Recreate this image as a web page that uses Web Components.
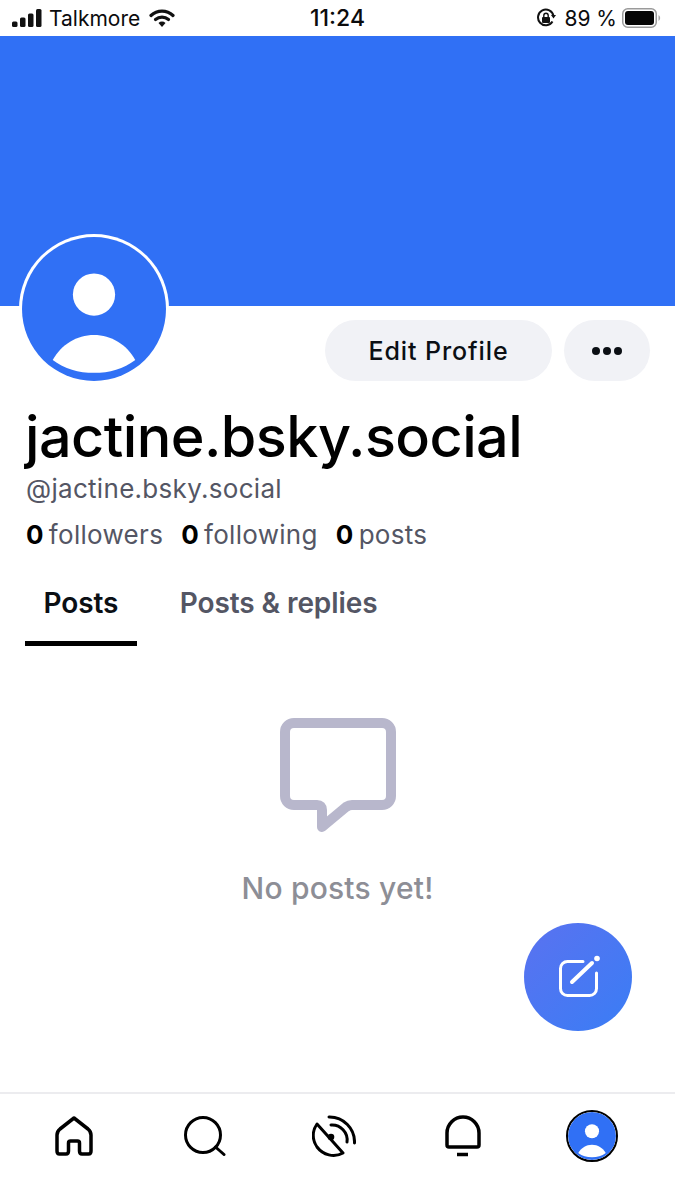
<!DOCTYPE html>
<html lang="en">
<head>
<meta charset="utf-8">
<title>jactine.bsky.social</title>
<style>
  html, body { margin: 0; padding: 0; background: #fff; }
  body { font-family: Inter, "Liberation Sans", sans-serif; width: 675px; height: 1200px; overflow: hidden; }
</style>
</head>
<body>
<app-shell>
  <status-bar carrier="Talkmore" time="11:24" battery="89 %"></status-bar>
  <profile-banner></profile-banner>
  <profile-header name="jactine.bsky.social" handle="@jactine.bsky.social"></profile-header>
  <feed-tabs></feed-tabs>
  <empty-feed>No posts yet!</empty-feed>
  <compose-fab slot="over"></compose-fab>
  <bottom-nav slot="nav"></bottom-nav>
</app-shell>

<script>
// Avatar por defecto, se usa en el perfil y en la barra inferior
const AVATAR_SVG = `
  <svg viewBox="0 0 150 150" width="100%" height="100%" aria-hidden="true">
    <circle cx="75" cy="75" r="75" fill="#3070f5"/>
    <circle cx="75" cy="60" r="22" fill="#fff"/>
    <path d="M32 128 C41 112 57 102 75 102 C93 102 109 112 118 128 C106 137 91 141.500 75 141.500 C59 141.500 44 137 32 128 Z" fill="#fff"/>
  </svg>`;

class AppShell extends HTMLElement {
  constructor() {
    super();
    this.attachShadow({ mode: "open" });
  }

  connectedCallback() {
    this.shadowRoot.innerHTML = `
      <style>
        :host { display: flex; flex-direction: column; position: relative; width: 675px; height: 1200px; }
        main { flex: 1; min-height: 0; display: flex; flex-direction: column; }
      </style>
      <main><slot></slot></main>
      <slot name="over"></slot>
      <slot name="nav"></slot>
    `;
  }
}

class StatusBar extends HTMLElement {
  constructor() {
    super();
    this.attachShadow({ mode: "open" });
  }

  connectedCallback() {
    this.shadowRoot.innerHTML = `
      <style>
        :host { display: grid; grid-template-columns: 1fr auto 1fr; align-items: center; height: 36px; padding: 0 14px 0 12px; color: #0b0b0d; font-size: 21px; }
        .left, .right { display: flex; align-items: center; }
        .left { gap: 7px; }
        .right { justify-content: flex-end; gap: 8px; }
        .time { font-weight: 500; font-size: 23px; margin-left: 2px; }
        svg { display: block; }
      </style>
      <div class="left">
        <svg width="30" height="18" viewBox="0 0 30 18">
          <rect x="0" y="12.500" width="5.500" height="5.500" rx="1.500" fill="#111"/>
          <rect x="8" y="8.500" width="5.500" height="9.500" rx="1.500" fill="#111"/>
          <rect x="16" y="4.500" width="5.500" height="13.500" rx="1.500" fill="#111"/>
          <rect x="24" y="0" width="5.500" height="18" rx="1.500" fill="#111"/>
        </svg>
        <span>${this.getAttribute("carrier")}</span>
        <svg width="26" height="18" viewBox="0 0 26 18" style="margin-left:2px">
          <path d="M2 6.500 A16 16 0 0 1 24 6.500" fill="none" stroke="#111" stroke-width="3.200" stroke-linecap="round"/>
          <path d="M6.500 10.500 A10 10 0 0 1 19.500 10.500" fill="none" stroke="#111" stroke-width="3.200" stroke-linecap="round"/>
          <path d="M13 18 L9.500 14 A5 5 0 0 1 16.500 14 Z" fill="#111"/>
        </svg>
      </div>
      <div class="time">${this.getAttribute("time")}</div>
      <div class="right">
        <svg width="20" height="20" viewBox="0 0 20 20">
          <path d="M16.500 13.500 A7.800 7.800 0 1 1 17.500 8" fill="none" stroke="#111" stroke-width="2"/>
          <path d="M15 7 L20 7 L17.500 10.500 Z" fill="#111"/>
          <rect x="6" y="9" width="8" height="6" rx="1" fill="#111"/>
          <path d="M7.800 9 V7.500 A2.200 2.200 0 0 1 12.200 7.500 V9" fill="none" stroke="#111" stroke-width="1.400"/>
        </svg>
        <span>${this.getAttribute("battery")}</span>
        <svg width="39" height="20" viewBox="0 0 39 20" style="margin-left:-3px">
          <rect x="0.750" y="0.750" width="33.500" height="18.500" rx="5" fill="none" stroke="#9a9a9a" stroke-width="1.500"/>
          <rect x="3" y="3" width="29" height="14" rx="3" fill="#060606"/>
          <path d="M36.500 7 A3.500 3.500 0 0 1 36.500 13 Z" fill="#aaa"/>
        </svg>
      </div>
    `;
  }
}

class ProfileBanner extends HTMLElement {
  constructor() {
    super();
    this.attachShadow({ mode: "open" });
  }

  connectedCallback() {
    this.shadowRoot.innerHTML = `
      <style>
        :host { display: block; height: 270px; background: #3070f5; }
      </style>
    `;
  }
}

class PillButton extends HTMLElement {
  constructor() {
    super();
    this.attachShadow({ mode: "open" });
  }

  connectedCallback() {
    this.shadowRoot.innerHTML = `
      <style>
        :host { display: inline-flex; align-items: center; justify-content: center; height: 61px; border-radius: 31px; background: #f1f2f6; color: #0b0f14; font-size: 25px; font-weight: 500; letter-spacing: 0.9px; cursor: pointer; }
      </style>
      <slot></slot>
    `;
  }
}

class StatItem extends HTMLElement {
  constructor() {
    super();
    this.attachShadow({ mode: "open" });
  }

  connectedCallback() {
    this.shadowRoot.innerHTML = `
      <style>
        :host { display: inline-flex; gap: 5px; font-size: 26px; color: #545664; letter-spacing: 0.3px; white-space: nowrap; }
        b { color: #000; font-weight: 700; }
      </style>
      <b>${this.getAttribute("value")}</b><span>${this.getAttribute("label")}</span>
    `;
  }
}

class ProfileHeader extends HTMLElement {
  constructor() {
    super();
    this.attachShadow({ mode: "open" });
  }

  connectedCallback() {
    this.shadowRoot.innerHTML = `
      <style>
        :host { display: block; position: relative; padding: 14px 25px 0 26px; }
        .avatar { position: absolute; left: 18.500px; top: -72px; width: 144px; height: 144px; padding: 3px; border-radius: 50%; background: #fff; line-height: 0; }
        .actions { display: flex; justify-content: flex-end; gap: 12px; }
        pill-button.edit { width: 227px; }
        pill-button.more { width: 86px; }
        h1 { margin: 21px 0 0 -1px; font-size: 57.500px; line-height: 68px; font-weight: 500; color: #000; letter-spacing: -0.55px; white-space: nowrap; }
        .handle { margin: 3px 0 0 0; font-size: 26px; line-height: 32px; color: #545664; letter-spacing: 0.3px; }
        .stats { display: flex; gap: 18px; margin-top: 14px; line-height: 32px; }
        svg { display: block; }
      </style>
      <div class="avatar">${AVATAR_SVG}</div>
      <div class="actions">
        <pill-button class="edit">Edit Profile</pill-button>
        <pill-button class="more" aria-label="More">
          <svg width="32" height="10" viewBox="0 0 32 10">
            <circle cx="5" cy="5" r="4" fill="#0b0f14"/>
            <circle cx="16" cy="5" r="4" fill="#0b0f14"/>
            <circle cx="27" cy="5" r="4" fill="#0b0f14"/>
          </svg>
        </pill-button>
      </div>
      <h1>${this.getAttribute("name")}</h1>
      <div class="handle">${this.getAttribute("handle")}</div>
      <div class="stats">
        <stat-item value="0" label="followers"></stat-item>
        <stat-item value="0" label="following"></stat-item>
        <stat-item value="0" label="posts"></stat-item>
      </div>
    `;
  }
}

class FeedTabs extends HTMLElement {
  constructor() {
    super();
    this.attachShadow({ mode: "open" });
  }

  connectedCallback() {
    this.shadowRoot.innerHTML = `
      <style>
        :host { display: flex; gap: 24px; padding: 15px 0 0 25px; font-size: 28px; font-weight: 600; color: #545664; letter-spacing: -0.1px; }
        .tab { padding: 17px 19px 0 18.500px; height: 80px; display: flex; align-items: flex-start; line-height: 40px; box-sizing: border-box; border-bottom: 5px solid transparent; }
        .tab.on { color: #0b0f14; border-bottom-color: #000; }
      </style>
      <div class="tab on">Posts</div>
      <div class="tab">Posts &amp; replies</div>
    `;
  }
}

class EmptyFeed extends HTMLElement {
  constructor() {
    super();
    this.attachShadow({ mode: "open" });
  }

  connectedCallback() {
    this.shadowRoot.innerHTML = `
      <style>
        :host { display: flex; flex-direction: column; align-items: center; padding-top: 72px; font-size: 30px; font-weight: 500; color: #8d8e96; letter-spacing: 0.2px; }
        svg { display: block; margin-bottom: 34px; }
        div { line-height: 40px; }
      </style>
      <svg width="116" height="116" viewBox="0 0 116 116">
        <path d="M14 5 H102 A9 9 0 0 1 111 14 V78 A9 9 0 0 1 102 87 H72 Q69 87 66 89 L42 109 V92 Q42 87 37 87 H14 A9 9 0 0 1 5 78 V14 A9 9 0 0 1 14 5 Z" fill="none" stroke="#b8b7cc" stroke-width="10" stroke-linejoin="round"/>
      </svg>
      <div><slot></slot></div>
    `;
  }
}

class ComposeFab extends HTMLElement {
  constructor() {
    super();
    this.attachShadow({ mode: "open" });
  }

  connectedCallback() {
    this.shadowRoot.innerHTML = `
      <style>
        :host { position: absolute; left: 524px; top: 923px; width: 108px; height: 108px; border-radius: 50%; background: linear-gradient(135deg, #5a72f0, #3a7df5); display: flex; align-items: center; justify-content: center; }
        svg { display: block; }
      </style>
      <svg width="44" height="44" viewBox="0 0 44 44" fill="none" stroke="#fff" stroke-width="3" stroke-linecap="round">
        <path d="M27 6.500 H11.500 A7 7 0 0 0 4.500 13.500 V33.500 A7 7 0 0 0 11.500 40.500 H33.500 A7 7 0 0 0 40.500 33.500 V18"/>
        <path d="M16 27 L36 8" stroke-width="4"/>
        <circle cx="41" cy="3.500" r="2.800" fill="#fff" stroke="none"/>
      </svg>
    `;
  }
}

class BottomNav extends HTMLElement {
  constructor() {
    super();
    this.attachShadow({ mode: "open" });
  }

  connectedCallback() {
    this.shadowRoot.innerHTML = `
      <style>
        :host { display: flex; gap: 39.500px; align-items: flex-start; height: 108px; box-sizing: border-box; border-top: 2px solid #ececef; padding: 15px 0 0 29px; }
        .item { width: 90px; height: 54px; display: flex; align-items: center; justify-content: center; flex: none; }
        svg { display: block; }
        .me { width: 52px; height: 52px; border-radius: 50%; border: 2px solid #000; box-sizing: border-box; line-height: 0; overflow: hidden; }
      </style>
      <div class="item">
        <svg width="38" height="40" viewBox="0 0 38 40" fill="none" stroke="#000" stroke-width="3.500" stroke-linejoin="round">
          <path d="M19 2 L33 13 Q36 15.500 36 19 V35 Q36 38 33.500 38 H27 Q24.500 38 24.500 35 V27 Q24.500 25 22.500 25 H15.500 Q13.500 25 13.500 27 V35 Q13.500 38 11 38 H4.500 Q2 38 2 35 V19 Q2 15.500 5 13 Z"/>
        </svg>
      </div>
      <div class="item">
        <svg width="42" height="40" viewBox="0 0 42 40" fill="none" stroke="#000" stroke-width="3" stroke-linecap="round" style="margin-left:2px">
          <circle cx="19" cy="19" r="17.500"/>
          <path d="M31.500 31 L40 38.500"/>
        </svg>
      </div>
      <div class="item">
        <svg width="44" height="44" viewBox="0 0 44 44" fill="none" stroke="#000" stroke-width="3" stroke-linecap="round" stroke-linejoin="round" style="margin-left:1px">
          <path d="M5 10 L31 39 C22 44 11 41 5 33 C0 26 0 17 5 10 Z"/>
          <circle cx="19" cy="23" r="3.300" fill="#000" stroke="none"/>
          <path d="M19 11 A15 15 0 0 1 35 28"/>
          <path d="M17 3 A25 25 0 0 1 42.500 29"/>
        </svg>
      </div>
      <div class="item">
        <svg width="38" height="42" viewBox="0 0 38 42" fill="none" stroke="#000" stroke-width="3.500" stroke-linejoin="round">
          <path d="M3 30 V18 A16 16 0 0 1 35 18 V30 Q35 32 33 32 H5 Q3 32 3 30 Z"/>
          <path d="M13 39.500 H24" stroke-width="3.500"/>
        </svg>
      </div>
      <div class="item"><div class="me">${AVATAR_SVG}</div></div>
    `;
  }
}

customElements.define("app-shell", AppShell);
customElements.define("status-bar", StatusBar);
customElements.define("profile-banner", ProfileBanner);
customElements.define("pill-button", PillButton);
customElements.define("stat-item", StatItem);
customElements.define("profile-header", ProfileHeader);
customElements.define("feed-tabs", FeedTabs);
customElements.define("empty-feed", EmptyFeed);
customElements.define("compose-fab", ComposeFab);
customElements.define("bottom-nav", BottomNav);
</script>
</body>
</html>
